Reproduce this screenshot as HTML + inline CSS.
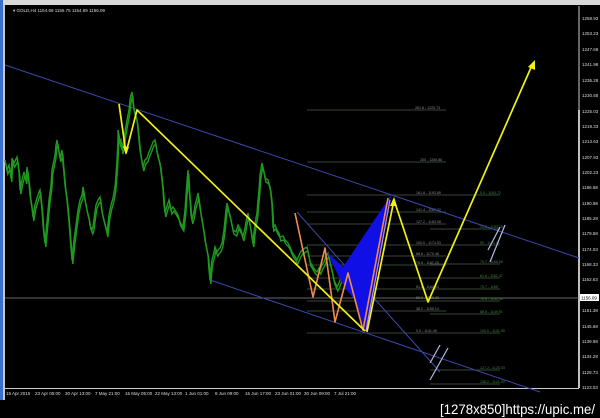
<!DOCTYPE html>
<html><head><meta charset="utf-8"><style>
html,body{margin:0;padding:0;background:#000;width:600px;height:418px;overflow:hidden}
svg{display:block}
text{font-family:"Liberation Sans",sans-serif}
</style></head><body>
<svg width="600" height="418" viewBox="0 0 600 418" xmlns="http://www.w3.org/2000/svg">
<rect width="600" height="418" fill="#000"/>
<rect x="0" y="0" width="600" height="5" fill="#d8d8d8"/>
<rect x="0" y="0" width="3" height="400" fill="#3a6fd0"/>
<rect x="3" y="5" width="2" height="395" fill="#c8c8c8"/>
<line x1="579" y1="6" x2="579" y2="388" stroke="#ccc" stroke-width="1"/>
<line x1="5" y1="388.5" x2="579" y2="388.5" stroke="#ccc" stroke-width="1"/>
<line x1="579" y1="110" x2="579" y2="388" stroke="#fff" stroke-width="1.5"/>
<text x="13" y="12" fill="#ddd" font-size="4.5">▾ GOLD,H4  1154.69 1156.75 1154.69 1156.09</text>
<g fill="#ddd" font-size="4.5">
<text x="582" y="20">1258.93</text><text x="582" y="35">1253.23</text><text x="582" y="51">1247.68</text>
<text x="582" y="66">1241.98</text><text x="582" y="82">1236.28</text><text x="582" y="97">1230.58</text>
<text x="582" y="113">1225.03</text><text x="582" y="128">1219.33</text><text x="582" y="143">1213.63</text>
<text x="582" y="159">1207.93</text><text x="582" y="174">1202.23</text><text x="582" y="189">1196.68</text>
<text x="582" y="205">1190.98</text><text x="582" y="220">1185.28</text><text x="582" y="235">1179.58</text>
<text x="582" y="251">1174.03</text><text x="582" y="266">1168.33</text><text x="582" y="281">1162.63</text>
<text x="582" y="312">1151.38</text><text x="582" y="328">1145.68</text><text x="582" y="343">1139.98</text>
<text x="582" y="358">1134.28</text><text x="582" y="374">1128.73</text><text x="582" y="389">1123.03</text>
</g>
<rect x="580" y="294" width="19" height="7" fill="#fff"/>
<text x="581" y="299.5" fill="#000" font-size="4.5">1156.09</text>
<g fill="#ddd" font-size="4.5">
<text x="6" y="395">15 Apr 2015</text><text x="35" y="395">23 Apr 05:00</text><text x="65" y="395">30 Apr 13:00</text>
<text x="95" y="395">7 May 21:00</text><text x="125" y="395">15 May 05:00</text><text x="155" y="395">22 May 13:00</text>
<text x="185" y="395">1 Jun 01:00</text><text x="215" y="395">8 Jun 09:00</text><text x="245" y="395">15 Jun 17:00</text>
<text x="275" y="395">23 Jun 01:00</text><text x="304" y="395">30 Jun 09:00</text><text x="334" y="395">7 Jul 21:00</text>
</g>
<line x1="5" y1="298" x2="579" y2="298" stroke="#888" stroke-width="0.8"/>
<g stroke="#4a5a4a" stroke-width="0.7">
<line x1="307" y1="110" x2="446" y2="110"/><line x1="307" y1="162" x2="446" y2="162"/>
<line x1="307" y1="195" x2="500" y2="195"/><line x1="307" y1="212" x2="446" y2="212"/>
<line x1="307" y1="224" x2="446" y2="224"/><line x1="430" y1="229" x2="500" y2="229"/>
<line x1="307" y1="245" x2="500" y2="245"/><line x1="307" y1="256" x2="446" y2="256"/>
<line x1="307" y1="265" x2="446" y2="265"/><line x1="430" y1="264" x2="500" y2="264"/>
<line x1="307" y1="278" x2="500" y2="278"/><line x1="307" y1="289" x2="500" y2="289"/>
<line x1="307" y1="301" x2="500" y2="301"/><line x1="307" y1="311" x2="446" y2="311"/>
<line x1="430" y1="314" x2="500" y2="314"/><line x1="307" y1="333" x2="500" y2="333"/>
<line x1="430" y1="370" x2="500" y2="370"/><line x1="430" y1="384" x2="500" y2="384"/>
</g>
<g fill="#8a8a8a" font-size="3.6">
<text x="415" y="109">261.8 - 1225.73</text><text x="420" y="161">200 - 1205.86</text>
<text x="416" y="194">161.8 - 1193.85</text><text x="416" y="211">141.4 - 1187.32</text>
<text x="416" y="223">127.2 - 1183.08</text><text x="416" y="244">100.0 - 1174.03</text>
<text x="416" y="255">88.6 - 1170.46</text><text x="416" y="264">78.6 - 1167.20</text>
<text x="416" y="288">61.8 - 1162.04</text><text x="416" y="299">50.0 - 1158.30</text>
<text x="416" y="310">38.2 - 1155.14</text><text x="416" y="332">0.0 - 1141.45</text>
</g>
<g fill="#3c8a3c" font-size="3.6">
<text x="480" y="194">0.0 - 1193.72</text><text x="480" y="228">23.6 - 1183.75</text>
<text x="480" y="244">50 - 1174.41</text><text x="480" y="263">70.7 - 1168.06</text>
<text x="480" y="277">61.8 - 1162.47</text><text x="480" y="288">70.7 - 1160</text>
<text x="480" y="300">78.6 - 1155.56</text><text x="480" y="313">88.6 - 1149.91</text>
<text x="480" y="332">100.0 - 1141.55</text><text x="480" y="369">127.2 - 1125.03</text>
<text x="480" y="383">138.2 - 1121.00</text>
</g>
<g stroke="#3a4aa8" stroke-width="1" fill="none">
<line x1="5" y1="65" x2="579" y2="258"/>
<line x1="210" y1="280" x2="540" y2="392"/>
<line x1="297" y1="212" x2="440" y2="372"/>
</g>
<g fill="none" stroke="#1f9a1f" stroke-width="1.4" stroke-linejoin="miter">
<polyline points="5,160 7,170 9,165 11,178 12,158 14,163 17,157 19,172 20,190 22,180 24,172 26,180 27,167 29,183 30,195 32,208 33,217 35,205 37,198 39,192 40,190 42,210 43,225 44,235 45,243 47,222 49,200 51,185 52,170 54,160 55,155 56,145 57,140 59,152 60,158 62,150 63,163 65,185 67,200 69,222 70,235 71,248 72,260 74,240 76,225 78,210 80,200 82,195 83,187 85,200 87,210 89,218 90,225 92,230 93,227 95,212 96,205 98,200 100,197 102,212 104,220 106,228 107,233 109,215 111,205 113,198 115,187 116,175 117,160 118,140 118,130 120,142 121,140 122,150 123,147 125,132 127,120 129,110 130,100 131,95 132,92 133,103 134,110 136,116 137,120 139,140 140,150 142,162 143,167 145,160 147,158 149,152 150,150 153,142 155,140 157,152 158,155 159,160 160,163 162,180 163,190 164,205 165,213 167,206 169,200 171,210 173,207 175,210 178,215 180,222 183,227 185,210 186,195 187,182 188,170 189,190 190,200 191,215 192,220 194,212 195,205 197,198 198,193 200,208 202,220 204,232 205,240 207,250 208,255 209,270 210,280 211,268 212,260 214,252 215,247 217,252 218,250 220,248 222,243 224,230 225,220 226,210 227,203 229,212 230,215 232,225 233,230 236,232 238,225 241,230 243,237 245,228 246,222 247,217 248,213 250,225 251,230 252,238 253,243 254,232 255,225 256,218 257,213 258,200 259,190 260,175 262,163 264,172 265,178 268,180 270,187 271,195 272,205 273,227 275,225 277,230 279,233 280,237 283,236 285,240 288,243 290,247 292,252 294,255 296,258 297,260 300,253 302,250 305,248 307,247 309,256 310,262 312,265 313,267 315,270 317,272 319,268 320,270 322,265 324,262 326,256 328,253 330,262 332,270 334,280 337,287 339,283 340,280 342,276 343,273 345,278 347,280 349,285 350,283 352,290 354,292 356,298 357,300 359,296 360,295 362,293"/>
<polyline transform="translate(0.8,4)" points="5,160 7,170 9,165 11,178 12,158 14,163 17,157 19,172 20,190 22,180 24,172 26,180 27,167 29,183 30,195 32,208 33,217 35,205 37,198 39,192 40,190 42,210 43,225 44,235 45,243 47,222 49,200 51,185 52,170 54,160 55,155 56,145 57,140 59,152 60,158 62,150 63,163 65,185 67,200 69,222 70,235 71,248 72,260 74,240 76,225 78,210 80,200 82,195 83,187 85,200 87,210 89,218 90,225 92,230 93,227 95,212 96,205 98,200 100,197 102,212 104,220 106,228 107,233 109,215 111,205 113,198 115,187 116,175 117,160 118,140 118,130 120,142 121,140 122,150 123,147 125,132 127,120 129,110 130,100 131,95 132,92 133,103 134,110 136,116 137,120 139,140 140,150 142,162 143,167 145,160 147,158 149,152 150,150 153,142 155,140 157,152 158,155 159,160 160,163 162,180 163,190 164,205 165,213 167,206 169,200 171,210 173,207 175,210 178,215 180,222 183,227 185,210 186,195 187,182 188,170 189,190 190,200 191,215 192,220 194,212 195,205 197,198 198,193 200,208 202,220 204,232 205,240 207,250 208,255 209,270 210,280 211,268 212,260 214,252 215,247 217,252 218,250 220,248 222,243 224,230 225,220 226,210 227,203 229,212 230,215 232,225 233,230 236,232 238,225 241,230 243,237 245,228 246,222 247,217 248,213 250,225 251,230 252,238 253,243 254,232 255,225 256,218 257,213 258,200 259,190 260,175 262,163 264,172 265,178 268,180 270,187 271,195 272,205 273,227 275,225 277,230 279,233 280,237 283,236 285,240 288,243 290,247 292,252 294,255 296,258 297,260 300,253 302,250 305,248 307,247 309,256 310,262 312,265 313,267 315,270 317,272 319,268 320,270 322,265 324,262 326,256 328,253 330,262 332,270 334,280 337,287 339,283 340,280 342,276 343,273 345,278 347,280 349,285 350,283 352,290 354,292 356,298 357,300 359,296 360,295 362,293"/>
</g>
<polygon fill="#1010e6" points="327,252 343,267 391,195 366,333 355,300 345,288 338,275"/>
<polyline fill="none" stroke="#f08a50" stroke-width="1.6" stroke-linejoin="round" points="295,213 313,297 325,248 335,322 348,273 363,330 388,198"/>
<line x1="366" y1="331" x2="390" y2="200" stroke="#c090d0" stroke-width="1.2"/>
<g stroke="#f0f018" stroke-width="1.7" fill="none" stroke-linejoin="round">
<polyline points="119,104 126,153 137,110 365,331"/>
<polyline points="367,332 394,200 428,302 533,63"/>
</g>
<g fill="#f0f018">
<polygon points="126,155 123,146 129,147"/>
<polygon points="535,60 528,67 535,70"/>
<polygon points="394,197 390,206 397,206"/>
</g>
<g stroke="#b8b8e8" stroke-width="1.2">
<line x1="488" y1="250" x2="500" y2="227"/><line x1="490" y1="262" x2="505" y2="225"/>
<line x1="430" y1="363" x2="440" y2="345"/><line x1="430" y1="380" x2="448" y2="348"/>
</g>
<text x="440" y="414" fill="#fff" font-size="14" font-family="Liberation Mono, monospace" textLength="155" lengthAdjust="spacingAndGlyphs">[1278x850]https://upic.me/</text>
</svg>
</body></html>
